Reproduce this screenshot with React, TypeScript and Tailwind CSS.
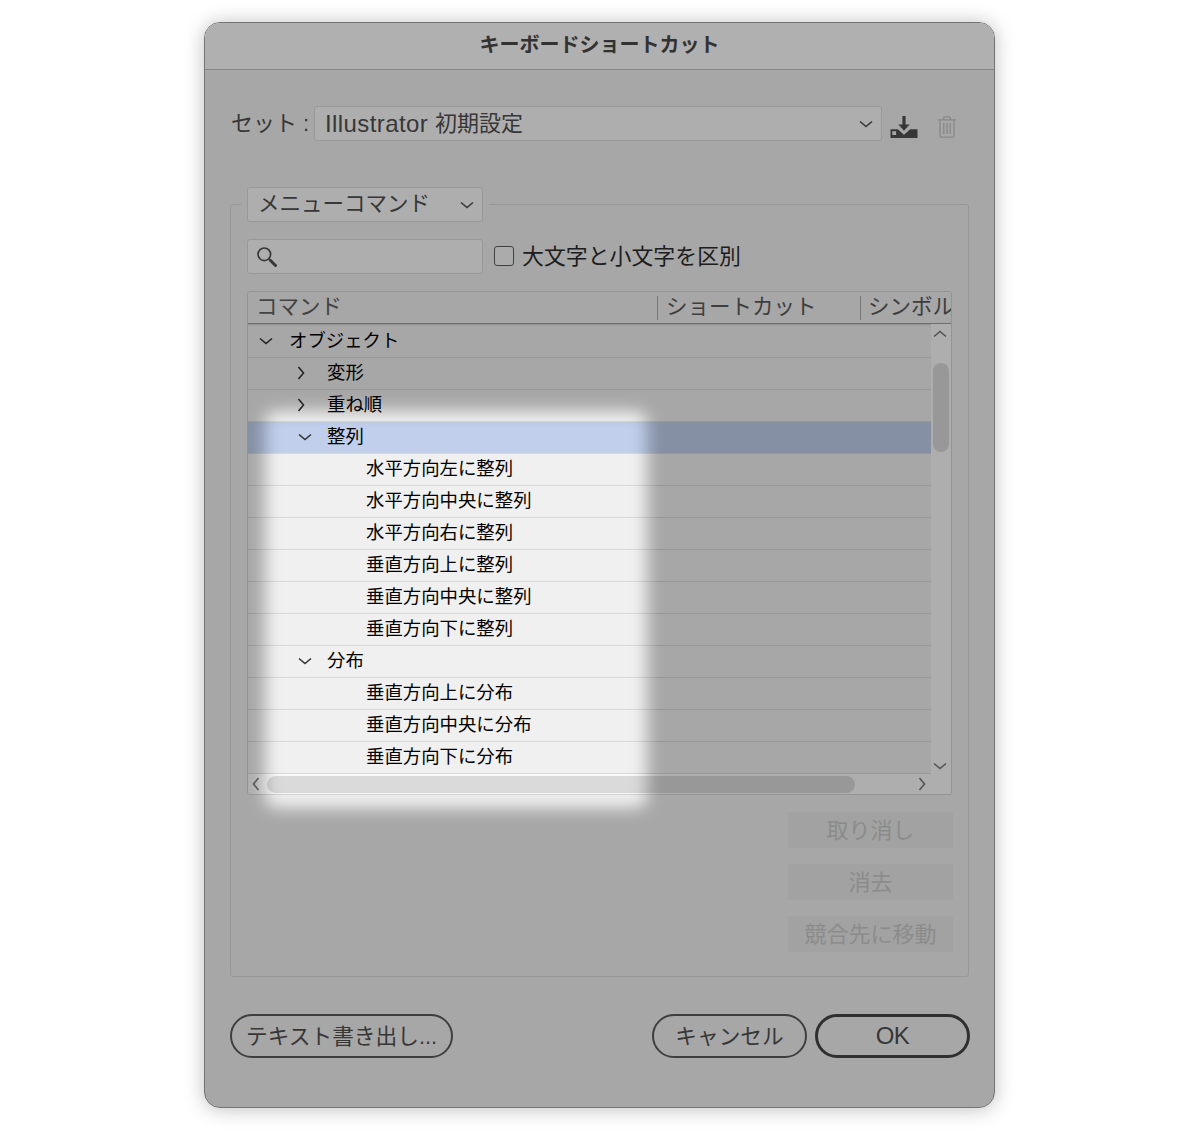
import clsx from 'clsx';

type TreeRow = {
  label: string;
  level: 0 | 1 | 2;
  state?: 'open' | 'closed';
  selected?: boolean;
};

const rows: TreeRow[] = [
  { label: 'オブジェクト', level: 0, state: 'open' },
  { label: '変形', level: 1, state: 'closed' },
  { label: '重ね順', level: 1, state: 'closed' },
  { label: '整列', level: 1, state: 'open', selected: true },
  { label: '水平方向左に整列', level: 2 },
  { label: '水平方向中央に整列', level: 2 },
  { label: '水平方向右に整列', level: 2 },
  { label: '垂直方向上に整列', level: 2 },
  { label: '垂直方向中央に整列', level: 2 },
  { label: '垂直方向下に整列', level: 2 },
  { label: '分布', level: 1, state: 'open' },
  { label: '垂直方向上に分布', level: 2 },
  { label: '垂直方向中央に分布', level: 2 },
  { label: '垂直方向下に分布', level: 2 },
];

const chevronPaths = {
  down: 'M1 4.5l6 5 6-5',
  up: 'M1 9.5l6-5 6 5',
  right: 'M4.5 1l5 6-5 6',
  left: 'M9.5 1l-5 6 5 6',
};

function Chevron({ dir, className }: { dir: keyof typeof chevronPaths; className?: string }) {
  return (
    <svg
      viewBox="0 0 14 14"
      className={clsx('w-[14px] h-[14px] shrink-0', className)}
      fill="none"
      stroke="currentColor"
      strokeWidth="1.6"
    >
      <path d={chevronPaths[dir]} />
    </svg>
  );
}

function SaveIcon() {
  return (
    <svg viewBox="0 0 28 22" className="w-[28px] h-[22px] shrink-0 text-[#505050]" fill="currentColor">
      <path d="M12.4 0h3.2v8.5h4L14 14.8 8.4 8.5h4z" />
      <path
        fillRule="evenodd"
        d="M.5 13.3h7.3l6.2 5.5 6.2-5.5h7.3V22H.5zM2.3 15.2v3.8h3.8v-3.800z"
      />
    </svg>
  );
}

function TrashIcon() {
  return (
    <svg
      viewBox="0 0 18 22"
      className="w-[18px] h-[22px] shrink-0 text-[#c4c4c4]"
      fill="none"
      stroke="currentColor"
      strokeWidth="1.4"
    >
      <path d="M0 3.9h18M5.6 3.9V2.2Q5.6.9 7 .9h4q1.4 0 1.4 1.3v1.7" />
      <path d="M2 4v15.8q0 1.3 1.3 1.3h11.4q1.3 0 1.3-1.3V4M5.8 7v11M9 7v11M12.2 7v11" />
    </svg>
  );
}

function SearchIcon() {
  return (
    <svg viewBox="0 0 20 20" className="w-[20px] h-[20px]" fill="none" stroke="currentColor">
      <circle cx="7.3" cy="7.3" r="6.3" strokeWidth="1.7" />
      <path d="M11.8 11.8l2.2 2.2" strokeWidth="2" />
      <path d="M13.5 13.5l5 5" strokeWidth="3" strokeLinecap="round" />
    </svg>
  );
}

function DisabledButton({ children }: { children: string }) {
  return (
    <button
      disabled
      className="w-[165px] h-[36px] pt-px rounded-[2px] bg-[#e8e8e8] text-[#c8c8c8] flex items-center justify-center"
    >
      {children}
    </button>
  );
}

function CommandRow({ row }: { row: TreeRow }) {
  return (
    <div
      className={clsx(
        'h-8 flex items-center border-b border-[#d8d8d8] text-[18.4px] leading-none text-black',
        row.level === 0 && 'pl-[11px]',
        row.level === 1 && row.state === 'closed' && 'pl-[46px]',
        row.level === 1 && row.state === 'open' && 'pl-[50px]',
        row.level === 2 && 'pl-[118px]',
        row.selected && 'bg-[#c1cfec]'
      )}
    >
      {row.state && (
        <Chevron
          dir={row.state === 'open' ? 'down' : 'right'}
          className={clsx(
            '-mt-px text-[#333333]',
            row.level === 0 && 'mr-[16px]',
            row.level === 1 && row.state === 'open' && 'mr-[15px]',
            row.level === 1 && row.state === 'closed' && 'mr-[19px]'
          )}
        />
      )}
      <span>{row.label}</span>
    </div>
  );
}

function CommandTable() {
  return (
    <div className="w-[705px] h-[504px] mt-[17px] border border-[#d4d4d4] rounded-[3px] overflow-hidden flex flex-col">
      <div className="h-[32px] shrink-0 flex items-center border-b border-[#9c9c9c] text-[21.5px] text-[#606060] whitespace-nowrap">
        <div className="w-[409px] shrink-0 pl-[8px]">コマンド</div>
        <div className="w-[203px] shrink-0 h-[24px] pl-[8px] flex items-center border-l border-[#aaaaaa] text-[#5a5a5a]">
          ショートカット
        </div>
        <div className="shrink-0 h-[24px] pl-[7px] flex items-center border-l border-[#aaaaaa] text-[#5a5a5a]">
          シンボル
        </div>
      </div>
      <div className="flex h-[450px] shrink-0">
        <div className="flex-1 pt-[2px] shadow-[inset_0_2px_2px_-1px_rgba(0,0,0,0.15)]">
          {rows.map((row) => (
            <CommandRow key={row.label} row={row} />
          ))}
        </div>
        <div className="w-[20px] bg-[#fafafa] flex flex-col items-center">
          <Chevron dir="up" className="mt-[3px] mr-[2px] text-[#777777]" />
          <div className="w-[16px] h-[89px] mt-[22px] rounded-full bg-[#dadada]" />
          <Chevron dir="down" className="mt-auto mb-[1px] mr-[2px] text-[#777777]" />
        </div>
      </div>
      <div className="flex-1 flex items-center bg-[#fafafa]">
        <Chevron dir="left" className="ml-px text-[#777777]" />
        <div className="w-[588px] h-[17px] ml-[4px] rounded-full bg-[#dadada]" />
        <Chevron dir="right" className="ml-auto mr-[22px] text-[#777777]" />
      </div>
    </div>
  );
}

export default function App() {
  return (
    <div className="w-[1200px] h-[1131px] pt-[22px] pl-[204px] bg-white overflow-hidden font-['Liberation_Sans','Noto_Sans_CJK_JP',sans-serif] text-[22px] leading-none text-[#505050]">
      <div className="relative w-[791px] h-[1086px] rounded-[16px] border border-[#747474] bg-[#f0f0f0] overflow-hidden shadow-[0_1px_20px_rgba(0,0,0,0.26)]">
        <header className="h-[47px] pb-[2px] bg-[#fcfcfc] border-b border-[#c0c0c0] flex items-center justify-center text-[20px] font-bold text-[#484848]">
          キーボードショートカット
        </header>

        <main className="px-[25px]">
          <div className="mt-[36px] h-[35px] flex items-center whitespace-nowrap">
            <span className="w-[84px] shrink-0 pl-px">セット :</span>
            <div className="w-[568px] h-[35px] pl-[10px] pr-[8px] border border-[#dadada] rounded-[3px] bg-[#fafafa] flex items-center justify-between">
              <span className="flex items-center gap-[7px]">
                <span className="text-[24px] tracking-[0.4px]">Illustrator</span>
                <span className="pt-px">初期設定</span>
              </span>
              <Chevron dir="down" />
            </div>
            <div className="flex items-center gap-[20px] ml-[8px] pt-[7px]">
              <SaveIcon />
              <TrashIcon />
            </div>
          </div>

          <section className="mt-[63px] w-[739px] h-[773px] border border-[#d8d8d8] rounded-[3px] pl-[16px] pr-[15px]">
            <div className="-mt-[18px] -ml-[6px] w-[248px] px-[6px] bg-[#f0f0f0]">
              <div className="w-[236px] h-[35px] pl-[10px] pr-[8px] border border-[#dadada] rounded-[3px] bg-[#fafafa] flex items-center justify-between">
                <span className="text-[21.5px]">メニューコマンド</span>
                <Chevron dir="down" />
              </div>
            </div>
            <div className="mt-[17px] flex items-center">
              <div className="w-[236px] h-[35px] pl-[9px] border border-[#dadada] rounded-[3px] bg-[#fafafa] flex items-center">
                <SearchIcon />
              </div>
              <span className="w-[20px] h-[20px] -mt-px ml-[11px] mr-[8px] rounded-[3px] border-[1.5px] border-[#5c5c5c] bg-[#f5f5f5]" />
              <span className="text-[21.9px] text-[#2c2c2c]">大文字と小文字を区別</span>
            </div>
            <CommandTable />
            <div className="mt-[17px] flex flex-col items-end gap-[16px]">
              <DisabledButton>取り消し</DisabledButton>
              <DisabledButton>消去</DisabledButton>
              <DisabledButton>競合先に移動</DisabledButton>
            </div>
          </section>

          <footer className="mt-[37px] w-[740px] flex items-center">
            <button className="w-[223px] h-[44px] pt-px rounded-full border-2 border-[#5a5a5a] text-[21.7px]">
              テキスト書き出し...
            </button>
            <button className="w-[155px] h-[44px] pt-px ml-auto rounded-full border-2 border-[#5a5a5a] text-[21.7px]">
              キャンセル
            </button>
            <button className="w-[155px] h-[44px] ml-[8px] rounded-full border-3 border-[#444444] text-[24px] tracking-[-0.5px]">
              OK
            </button>
          </footer>
        </main>

        {/* spotlight: everything outside this box is dimmed */}
        <div className="absolute left-[60px] top-[388px] w-[382px] h-[397px] rounded-[12px] shadow-[0_0_0_1200px_rgba(0,0,0,0.3)] blur-[8px] pointer-events-none" />
      </div>
    </div>
  );
}
